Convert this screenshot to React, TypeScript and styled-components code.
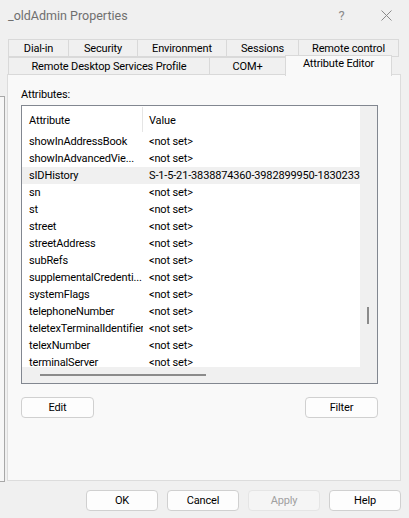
import React from 'react'
import styled, { createGlobalStyle } from 'styled-components'

const GlobalStyle = createGlobalStyle`
  html, body {
    margin: 0;
    padding: 0;
    background: #f0f0f0;
  }

  body {
    font-family: Roboto, "Segoe UI", "Liberation Sans", sans-serif;
    font-size: 11px;
    letter-spacing: -0.15px;
    color: #000;
  }
`

const Window = styled.div`
  width: 409px;
  height: 518px;
  background: #f0f0f0;
  display: flex;
  flex-direction: column;
  overflow: hidden;
`

const TitleBar = styled.div`
  height: 31px;
  display: flex;
  align-items: center;
  padding-left: 8px;
`

const Title = styled.div`
  flex: 1;
  font-size: 12.5px;
  letter-spacing: 0;
  color: #6f6f6f;
`

const CaptionButton = styled.div`
  width: 45px;
  height: 31px;
  display: flex;
  align-items: center;
  justify-content: center;
  color: #8a8a8a;
  font-size: 13px;
`

const TabStrip = styled.div`
  margin-top: 8px;
  padding-left: 8px;
  display: flex;
  flex-direction: column;
`

const TabRow = styled.div`
  display: flex;
  height: 18px;
`

const Tab = styled.div<{ $w: number; $active?: boolean }>`
  box-sizing: border-box;
  width: ${p => p.$w}px;
  height: ${p => (p.$active ? 21 : 18)}px;
  margin-top: ${p => (p.$active ? -2 : 0)}px;
  background: ${p => (p.$active ? '#f9f9f9' : '#f0f0f0')};
  border: 1px solid #d9d9d9;
  border-bottom: ${p => (p.$active ? 'none' : '1px solid #d9d9d9')};
  margin-right: -1px;
  display: flex;
  align-items: ${p => (p.$active ? 'flex-start' : 'center')};
  padding-top: ${p => (p.$active ? 1 : 0)}px;
  justify-content: center;
  white-space: nowrap;
  position: relative;
  z-index: ${p => (p.$active ? 2 : 1)};
`

const Body = styled.div`
  display: flex;
  align-items: flex-start;
  margin-top: -1px;
`

const EdgeStrip = styled.div`
  box-sizing: border-box;
  width: 5px;
  height: 386px;
  margin-top: 22px;
  background: #f7f7f7;
  border: 1px solid #a8a8a8;
  border-left: none;
  flex-shrink: 0;
`

const Panel = styled.div`
  box-sizing: border-box;
  width: 394px;
  height: 407px;
  margin-left: 2px;
  background: #f9f9f9;
  border: 1px solid #dcdcdc;
  padding: 12px 0 0 13px;
  display: flex;
  flex-direction: column;
`

const Label = styled.div`
  height: 18px;
  line-height: 16px;
`

const ListBox = styled.div`
  box-sizing: border-box;
  width: 357px;
  height: 279px;
  border: 1px solid #828790;
  background: #fff;
  display: grid;
  grid-template-columns: 338px 17px;
  grid-template-rows: 261px 16px;
`

const ListViewport = styled.div`
  overflow: hidden;
  display: flex;
  flex-direction: column;
`

const HeaderRow = styled.div`
  height: 27px;
  flex-shrink: 0;
  display: flex;
  align-items: center;
`

const HeaderCell = styled.div<{ $w?: number; $sep?: boolean }>`
  box-sizing: border-box;
  width: ${p => (p.$w ? `${p.$w}px` : 'auto')};
  flex: ${p => (p.$w ? 'none' : 1)};
  height: 25px;
  display: flex;
  align-items: center;
  padding-left: ${p => (p.$sep ? 7 : 6)}px;
  padding-top: 1px;
  border-right: ${p => (p.$sep ? '1px solid #e5e5e5' : 'none')};
`

const Row = styled.div<{ $hl?: boolean }>`
  height: 17px;
  flex-shrink: 0;
  display: flex;
  align-items: center;
  background: ${p => (p.$hl ? '#f0f0f0' : 'transparent')};
  white-space: nowrap;
`

const Cell = styled.div<{ $w?: number }>`
  box-sizing: border-box;
  width: ${p => (p.$w ? `${p.$w}px` : 'auto')};
  flex: ${p => (p.$w ? 'none' : 1)};
  padding-left: ${p => (p.$w ? 7 : 6)}px;
  overflow: hidden;
`

const VScroll = styled.div`
  background: #f0f0f0;
  position: relative;
`

const VThumb = styled.div`
  position: absolute;
  left: 7px;
  top: 201px;
  width: 2px;
  height: 17px;
  background: #8b8b8b;
`

const HScroll = styled.div`
  background: #f0f0f0;
  position: relative;
`

const HThumb = styled.div`
  position: absolute;
  left: 18px;
  top: 7px;
  width: 166px;
  height: 2px;
  background: #8b8b8b;
`

const Corner = styled.div`
  background: #f0f0f0;
`

const ButtonRow = styled.div`
  width: 357px;
  margin-top: 13px;
  display: flex;
  justify-content: space-between;
`

const Button = styled.div<{ $disabled?: boolean; $w?: number }>`
  box-sizing: border-box;
  width: ${p => p.$w ?? 73}px;
  height: 21px;
  border: 1px solid ${p => (p.$disabled ? '#e5e5e5' : '#d0d0d0')};
  border-radius: 4px;
  background: ${p => (p.$disabled ? '#f5f5f5' : '#fdfdfd')};
  color: ${p => (p.$disabled ? '#a0a0a0' : '#000')};
  display: flex;
  align-items: center;
  justify-content: center;
`

const Footer = styled.div`
  margin-top: 8px;
  padding-right: 8px;
  display: flex;
  justify-content: flex-end;
  gap: 9px;
`

const rows: [string, string][] = [
  ['showInAddressBook', '<not set>'],
  ['showInAdvancedVie...', '<not set>'],
  ['sIDHistory', 'S-1-5-21-3838874360-3982899950-1830233'],
  ['sn', '<not set>'],
  ['st', '<not set>'],
  ['street', '<not set>'],
  ['streetAddress', '<not set>'],
  ['subRefs', '<not set>'],
  ['supplementalCredenti...', '<not set>'],
  ['systemFlags', '<not set>'],
  ['telephoneNumber', '<not set>'],
  ['teletexTerminalIdentifier', '<not set>'],
  ['telexNumber', '<not set>'],
  ['terminalServer', '<not set>'],
]

const CloseIcon = () => (
  <svg width="11" height="11" viewBox="0 0 11 11">
    <path d="M0.5 0.5 L10.5 10.5 M10.5 0.5 L0.5 10.5" stroke="#8a8a8a" strokeWidth="1" />
  </svg>
)

const App = () => (
  <Window>
    <GlobalStyle />
    <TitleBar>
      <Title>_oldAdmin Properties</Title>
      <CaptionButton>?</CaptionButton>
      <CaptionButton>
        <CloseIcon />
      </CaptionButton>
    </TitleBar>
    <TabStrip>
      <TabRow>
        <Tab $w={61}>Dial-in</Tab>
        <Tab $w={70}>Security</Tab>
        <Tab $w={90}>Environment</Tab>
        <Tab $w={73}>Sessions</Tab>
        <Tab $w={101}>Remote control</Tab>
      </TabRow>
      <TabRow>
        <Tab $w={202}>Remote Desktop Services Profile</Tab>
        <Tab $w={77}>COM+</Tab>
        <Tab $w={107} $active>
          Attribute Editor
        </Tab>
      </TabRow>
    </TabStrip>
    <Body>
      <EdgeStrip />
      <Panel>
        <Label>Attributes:</Label>
        <ListBox>
          <ListViewport>
            <HeaderRow>
              <HeaderCell $w={121} $sep>
                Attribute
              </HeaderCell>
              <HeaderCell>Value</HeaderCell>
            </HeaderRow>
            {rows.map(([name, value]) => (
              <Row key={name} $hl={name === 'sIDHistory'}>
                <Cell $w={121}>{name}</Cell>
                <Cell>{value}</Cell>
              </Row>
            ))}
          </ListViewport>
          <VScroll>
            <VThumb />
          </VScroll>
          <HScroll>
            <HThumb />
          </HScroll>
          <Corner />
        </ListBox>
        <ButtonRow>
          <Button>Edit</Button>
          <Button>Filter</Button>
        </ButtonRow>
      </Panel>
    </Body>
    <Footer>
      <Button $w={72}>OK</Button>
      <Button $w={72}>Cancel</Button>
      <Button $w={72} $disabled>
        Apply
      </Button>
      <Button $w={72}>Help</Button>
    </Footer>
  </Window>
)

export default App
